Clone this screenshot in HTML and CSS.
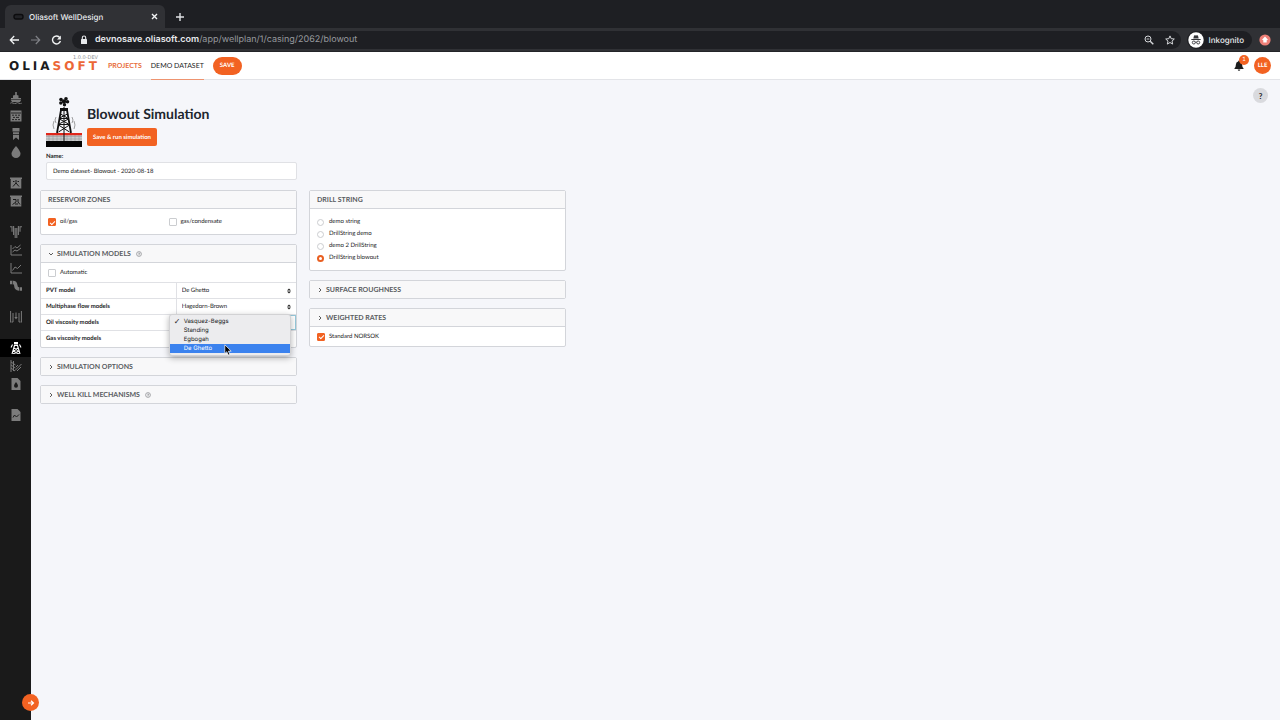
FILE: index.html
```html
<!doctype html>
<html lang="en">
<head>
  <meta charset="utf-8">
  <meta name="viewport" content="width=device-width, initial-scale=1.0">
  <title>Oliasoft WellDesign</title>
  <link rel="stylesheet" href="styles.css">
</head>
<body>

  <div class="tabs">
    <div class="tab">
      <svg class="favicon" width="12" height="8" viewBox="0 0 12 8"><rect x="1" y="1.5" width="9" height="4.5" rx="2" fill="#222327" stroke="#0c0c0e" stroke-width="1.4"/></svg>
      <span class="tab-title">Oliasoft WellDesign</span>
      <button class="plain" aria-label="Close tab"><svg width="7" height="7" viewBox="0 0 7 7"><path d="M1 1l5 5M6 1L1 6" stroke="#f1f3f4" stroke-width="1.4"/></svg></button>
    </div>
    <button class="plain new-tab" aria-label="New tab"><svg width="10" height="10" viewBox="0 0 10 10"><path d="M5 1v8M1 5h8" stroke="#dfe1e5" stroke-width="1.4"/></svg></button>
  </div>

  <div class="toolbar">
    <div class="nav-buttons">
      <button class="plain" aria-label="Back"><svg width="11" height="10" viewBox="0 0 11 10"><path d="M10 5H1.5M5.2 1L1.3 5l3.9 4" fill="none" stroke="#f1f3f4" stroke-width="1.3"/></svg></button>
      <button class="plain" aria-label="Forward"><svg width="11" height="10" viewBox="0 0 11 10"><path d="M1 5h8.500M5.800 1l3.900 4-3.900 4" fill="none" stroke="#808287" stroke-width="1.2"/></svg></button>
      <button class="plain" aria-label="Reload"><svg width="11" height="10" viewBox="0 0 11 10"><path d="M8.800 2.600A4 4 0 1 0 9.400 6" fill="none" stroke="#f1f3f4" stroke-width="1.4"/><path d="M9.900.6v3.900H6z" fill="#f1f3f4"/></svg></button>
    </div>
    <div class="address">
      <svg width="8" height="10" viewBox="0 0 8 10"><rect x="1" y="4" width="6" height="5" rx=".6" fill="#e8eaed"/><path d="M2.300 4V2.700a1.700 1.700 0 0 1 3.400 0V4" fill="none" stroke="#e8eaed" stroke-width="1.100"/></svg>
      <span class="url"><b>devnosave.oliasoft.com</b>/app/wellplan/1/casing/2062/blowout</span>
      <svg width="10" height="10" viewBox="0 0 10 10" fill="none" stroke="#d5d7da"><circle cx="4" cy="4" r="3"/><path d="M6.200 6.200L9.300 9.300" stroke-width="1.400"/><path d="M2.600 4h2.800" stroke-width=".9"/></svg>
      <svg width="10" height="10" viewBox="0 0 10 10"><path d="M5 .9l1.200 2.800 3.100.3-2.300 2.100.7 3L5 7.500 2.300 9.100l.7-3L.7 4l3.100-.3z" fill="none" stroke="#d5d7da"/></svg>
    </div>
    <div class="incognito">
      <svg width="16" height="16" viewBox="0 0 16 16"><circle cx="8" cy="8" r="7.700" fill="#fff"/><path d="M5.300 6.500L6 3.700q.2-.6.900-.4l1.100.3 1.100-.3q.7-.2.900.4l.7 2.800z" fill="#35363a"/><path d="M3.300 7.500h9.400" stroke="#35363a"/><g fill="none" stroke="#35363a" stroke-width=".9"><circle cx="5.800" cy="10.500" r="1.500"/><circle cx="10.200" cy="10.500" r="1.500"/><path d="M7.300 10.200q.7-.4 1.400 0"/></g></svg>
      <span>Inkognito</span>
    </div>
    <svg width="12" height="12" viewBox="0 0 12 12"><circle cx="6" cy="6" r="5.600" fill="#ee8078"/><path d="M6 2.600l3 3.200-1.300.4V8.600H4.300V6.200L3 5.800z" fill="#fff"/></svg>
  </div>

  <header class="header">
    <a class="logo" href="#"><span>OLIA</span><span class="logo-soft">SOFT</span><small>1.0.0-DEV</small></a>
    <nav class="menu">
      <a class="menu-link" href="#">Projects</a>
      <a class="menu-link active" href="#">Demo dataset</a>
    </nav>
    <button class="save">Save</button>
    <button class="plain bell" aria-label="Notifications">
      <svg width="10" height="11" viewBox="0 0 10 11"><path d="M5 .5q.8 0 .8.9 2.300.5 2.300 3.100 0 2.400 1.400 3.800v.6H.5v-.6q1.400-1.400 1.400-3.800 0-2.600 2.300-3.100 0-.9.800-.9z" fill="#1b1c1d"/><path d="M3.700 9.500h2.600a1.300 1.300 0 0 1-2.600 0z" fill="#1b1c1d"/></svg>
      <span class="count">1</span>
    </button>
    <button class="avatar">LLE</button>
  </header>

  <div class="page">
    <nav class="sidebar">
      <div class="side-group">
        <a class="side-link" href="#" aria-label="Rig"><svg viewBox="0 0 12 12"><path d="M5.200 0h1.600v3l1.700.5V6H11v1.200H1V6h2V3.500L5.200 3z"/><path d="M.7 7.800h10.600L10 10H2z"/><path d="M.3 11.200q1.400-1 2.900 0t2.900 0 2.900 0 2.700 0" fill="none" stroke="currentColor"/></svg></a>
        <a class="side-link" href="#" aria-label="Formation"><svg viewBox="0 0 12 12"><path d="M.5.500h11v11H.5z"/><path d="M1 3h10M2 5.200h2m1 0h2m1 0h2M3 7.400h2m1 0h3M2 9.600h2m1 0h2m1 0h2" stroke="#1a1a1a" stroke-width=".9"/></svg></a>
        <a class="side-link" href="#" aria-label="Casing"><svg viewBox="0 0 12 12"><path d="M2.500 0h7v3.500h-7zM3 4.200h6v2H3zM3 7h6v5L6 9.500 3 12z"/></svg></a>
        <a class="side-link" href="#" aria-label="Fluids"><svg viewBox="0 0 12 12"><path d="M6 0q4.500 5 4.500 7.700a4.500 4.300 0 0 1-9 0Q1.500 5 6 0z"/></svg></a>
      </div>
      <div class="side-group">
        <a class="side-link" href="#" aria-label="Pore pressure"><svg viewBox="0 0 12 12"><path d="M0 .5h12V2h-.7v9.500H.7V2H0z"/><path d="M6 3v3L3 9.500M6 6l3 3.500M3 4.500h1.500m3 0H9" fill="none" stroke="#1a1a1a"/></svg></a>
        <a class="side-link" href="#" aria-label="Temperature"><svg viewBox="0 0 12 12"><path d="M0 .5h12V2h-.7v9.500H.7V2H0z"/><path d="M3 4.500h3V7L2.500 9.500M8 4v3l2 2.500M5 9h3" fill="none" stroke="#1a1a1a"/></svg></a>
      </div>
      <div class="side-group">
        <a class="side-link" href="#" aria-label="Well schematic"><svg viewBox="0 0 12 12"><path d="M0 .8h2v5M3.600 0v9M5.200 2v10M6.800 2v10M8.400 0v9M12 .8h-2v5" fill="none" stroke="currentColor" stroke-width="1.100"/></svg></a>
        <a class="side-link" href="#" aria-label="Load curves"><svg viewBox="0 0 12 12"><path d="M1 1v10h11M2.500 8l2.500-2 2 1 4-3M2.500 5L5 2.500 7 4l3.500-3" fill="none" stroke="currentColor"/></svg></a>
        <a class="side-link" href="#" aria-label="Chart"><svg viewBox="0 0 12 12"><path d="M1 1v10h11M2.500 8.500L5 5l2.500 1.500L11 3" fill="none" stroke="currentColor"/></svg></a>
        <a class="side-link" href="#" aria-label="Trajectory"><svg viewBox="0 0 12 12"><path d="M0 2.500h3q2.500 0 2.700 2.700Q6 9 9 9h3" fill="none" stroke="currentColor" stroke-width="3.400"/><path d="M2.500.5v4M9.500 7v4.500" stroke="#1a1a1a" stroke-width=".6"/></svg></a>
      </div>
      <div class="side-group">
        <a class="side-link" href="#" aria-label="Tubing"><svg viewBox="0 0 12 12"><path d="M.6 0v11.500M3 2v9H1.500M11.400 0v11.500M9 2v9h1.500M6 1.500V7" fill="none" stroke="currentColor"/><path d="M4.300 6h3.400L6 8.500z"/></svg></a>
      </div>
      <div class="side-group">
        <a class="side-link current" href="#" aria-label="Blowout"><svg viewBox="0 0 12 12"><path d="M4.500 3.500L2 12M7.500 3.500L10 12M4 3.500h4M4 6l4 2.500M8 6L3 9.500M3 9l6 3M9 9l-6 3M1 5.500l1.500-3M11 5.500L9.500 2.500" fill="none" stroke="currentColor" stroke-width="1.100"/><path d="M4 0h4v2.500H4z"/></svg></a>
        <a class="side-link" href="#" aria-label="Survey"><svg viewBox="0 0 12 12"><path d="M1 0v12M3.500 1v10M1 2l4.500 3M1 5l4.500 3M1 8l4 3M5 10.500L11.500 4M7 11l4-4M6 7l2-2" fill="none" stroke="currentColor"/></svg></a>
        <a class="side-link" href="#" aria-label="Fluid report"><svg viewBox="0 0 12 12"><path d="M1.500 0h6l3 3v9h-9z"/><path d="M6 4q2 2.500 2 3.700a2 2 0 0 1-4 0Q4 6.500 6 4z" fill="#1a1a1a"/></svg></a>
      </div>
      <div class="side-group">
        <a class="side-link" href="#" aria-label="Report"><svg viewBox="0 0 12 12"><path d="M1.500 0h6l3 3v9h-9z"/><path d="M3 8.500L4.500 6 6.500 8 9 5.500" fill="none" stroke="#1a1a1a"/></svg></a>
      </div>
      <button class="expand" aria-label="Expand menu"><svg width="8" height="8" viewBox="0 0 8 8"><path d="M1 4h5M4 1.700L6.500 4 4 6.300" fill="none" stroke="#fff" stroke-width="1.200"/></svg></button>
    </nav>

    <main class="main">
      <button class="help" aria-label="Help">?</button>

      <div class="title">
        <svg width="36" height="50" viewBox="0 0 36 50">
          <path d="M0 38h36v6H0z" fill="#c9cacc"/>
          <path d="M0 39.500h36M0 42h36M3 38v6M7 38v6M11 38v6M15 38v6M21 38v6M25 38v6M29 38v6M33 38v6" stroke="#999b9f" stroke-width=".6"/>
          <path d="M0 44h36v6H0z" fill="#050505"/>
          <path d="M0 36h36v2.300H0z" fill="#e0271b"/>
          <path d="M14 11h8v3h-8z" fill="#111"/>
          <g fill="none" stroke="#111">
            <path d="M15 13l-4 23M21 13l4 23" stroke-width="1.800"/>
            <path d="M14.500 17l7 4M21.500 17l-8 4M13.500 22l9 5M22.500 22l-9.500 5M12.500 28l11 7M23.500 28l-11 7M14 21.500h8M13 27.500h10M18 10v34"/>
            <path d="M10 20q-2 3 0 6M8 24q-2 4 0 8M26 20q2 3 0 6M28 24q2 4 0 8" stroke="#777" stroke-width=".7"/>
          </g>
          <g fill="#111">
            <circle cx="18" cy="4.500" r="2.200"/>
            <circle cx="15" cy="2.500" r="1.800"/>
            <circle cx="20" cy="1.800" r="1.800"/>
            <circle cx="21.500" cy="4.800" r="1.800"/>
            <circle cx="14.800" cy="6" r="1.700"/>
            <circle cx="18.500" cy="7.800" r="1.700"/>
          </g>
        </svg>
        <div class="title-text">
          <h1>Blowout Simulation</h1>
          <button class="run">Save &amp; run simulation</button>
        </div>
      </div>

      <div class="name">
        <label for="name">Name:</label>
        <input id="name" type="text" value="Demo dataset- Blowout - 2020-08-18">
      </div>

      <div class="columns">
        <div class="column">
          <section class="panel">
            <h2>Reservoir zones</h2>
            <div class="options zones">
              <label><input type="checkbox" checked>oil/gas</label>
              <label><input type="checkbox">gas/condensate</label>
            </div>
          </section>

          <section class="panel">
            <h2><svg class="chevron" viewBox="0 0 6 6"><path d="M1 2l2 2 2-2"/></svg>Simulation models<svg class="info" viewBox="0 0 6 6"><circle cx="3" cy="3" r="2.400"/><path d="M2.200 2.300q.8-.8 1.600 0 0 .7-.8.900v1.200"/></svg></h2>
            <label class="line"><input type="checkbox">Automatic</label>
            <table class="models">
              <tr>
                <th><label for="pvt">PVT model</label></th>
                <td><select id="pvt"><option>De Ghetto</option></select></td>
              </tr>
              <tr>
                <th><label for="flow">Multiphase flow models</label></th>
                <td><select id="flow"><option>Hagedorn-Brown</option></select></td>
              </tr>
              <tr>
                <th><label for="oil">Oil viscosity models</label></th>
                <td class="open">
                  <select id="oil"><option></option></select>
                  <ul class="dropdown">
                    <li class="checked">Vasquez-Beggs</li>
                    <li>Standing</li>
                    <li>Egbogah</li>
                    <li class="hover">De Ghetto</li>
                  </ul>
                  <svg class="cursor" width="8" height="12" viewBox="0 0 8 12"><path d="M.8.8v8.700l2-1.800 1.400 3.400 1.600-.7-1.400-3.300h2.800z" fill="#000" stroke="#fff" stroke-width=".7"/></svg>
                </td>
              </tr>
              <tr>
                <th><label for="gas">Gas viscosity models</label></th>
                <td><select id="gas"><option></option></select></td>
              </tr>
            </table>
          </section>

          <section class="panel">
            <h2><svg class="chevron" viewBox="0 0 6 6"><path d="M2 1l2 2-2 2"/></svg>Simulation options</h2>
          </section>

          <section class="panel">
            <h2><svg class="chevron" viewBox="0 0 6 6"><path d="M2 1l2 2-2 2"/></svg>Well kill mechanisms<svg class="info" viewBox="0 0 6 6"><circle cx="3" cy="3" r="2.400"/><path d="M2.200 2.300q.8-.8 1.600 0 0 .7-.8.900v1.200"/></svg></h2>
          </section>
        </div>

        <div class="column">
          <section class="panel">
            <h2>Drill string</h2>
            <div class="options">
              <label><input type="radio" name="string">demo string</label>
              <label><input type="radio" name="string">DrillString demo</label>
              <label><input type="radio" name="string">demo 2 DrillString</label>
              <label><input type="radio" name="string" checked>DrillString blowout</label>
            </div>
          </section>

          <section class="panel">
            <h2><svg class="chevron" viewBox="0 0 6 6"><path d="M2 1l2 2-2 2"/></svg>Surface roughness</h2>
          </section>

          <section class="panel">
            <h2><svg class="chevron" viewBox="0 0 6 6"><path d="M2 1l2 2-2 2"/></svg>Weighted rates</h2>
            <label class="line"><input type="checkbox" checked>Standard NORSOK</label>
          </section>
        </div>
      </div>
    </main>
  </div>

</body>
</html>
```
FILE: styles.css
```css
* {
  box-sizing: border-box;
}
body {
  margin: 0;
  min-height: 100vh;
  display: flex;
  flex-direction: column;
  font: 7px/12px Lato, sans-serif;
  text-rendering: geometricPrecision;
  color: #1b1c1d;
  background: #f5f6fa;
}
button, input, select {
  font: inherit;
  color: inherit;
  text-rendering: inherit;
  margin: 0;
}
button {
  border: 0;
  padding: 0;
}
a {
  text-decoration: none;
}
svg {
  display: block;
  flex: none;
}
.plain {
  background: none;
}

/* browser bar */
.tabs {
  display: flex;
  align-items: flex-end;
  height: 28px;
  padding-left: 5px;
  background: #1e1f23;
}
.tab {
  display: flex;
  align-items: center;
  gap: 4px;
  width: 160px;
  height: 23px;
  padding: 0 7px 0 8px;
  border-radius: 6px 6px 0 0;
  background: #303135;
  color: #e8eaed;
  font: 500 8px/12px Inter, sans-serif;
}
.tab-title {
  flex: 1;
}
.new-tab {
  margin: 0 10px 6px;
}
.toolbar {
  display: flex;
  align-items: center;
  gap: 6px;
  height: 24px;
  padding: 0 9px;
  background: #303135;
  border-bottom: 1px solid #232428;
}
.nav-buttons {
  display: flex;
  gap: 10px;
  margin-right: 4px;
}
.address {
  flex: 1;
  display: flex;
  align-items: center;
  gap: 11px;
  height: 18px;
  padding: 0 6px 0 8px;
  border-radius: 9px;
  background: #1e1f23;
  color: #96999e;
  font: 9px/15px Inter, sans-serif;
}
.url {
  flex: 1;
  margin-left: -4px;
}
.url b {
  color: #e8eaed;
  font-weight: 600;
}
.incognito {
  display: flex;
  align-items: center;
  gap: 5px;
  height: 18px;
  margin-right: 1px;
  padding: 0 8px 0 1px;
  border-radius: 9px;
  background: #1e1f23;
  color: #e8eaed;
  font: 500 8px/14px Inter, sans-serif;
}

/* top menu */
.header {
  display: flex;
  align-items: center;
  height: 28px;
  padding: 0 9px;
  background: #fff;
  border-bottom: 1px solid #e3e4e8;
}
.logo {
  position: relative;
  width: 99px;
  color: #1b1c1d;
  font: bold 12px/14px "DejaVu Sans", sans-serif;
  letter-spacing: 3px;
}
.logo-soft {
  color: #ec6737;
}
.logo small {
  position: absolute;
  top: -4px;
  right: 10px;
  color: #8d8f93;
  font: 5px/6px "DejaVu Sans", sans-serif;
  letter-spacing: 0;
}
.menu {
  display: flex;
  gap: 9px;
  align-self: stretch;
}
.menu-link {
  line-height: 28px;
  height: 28px;
  color: #e8703e;
  font-size: 7px;
  font-weight: bold;
  text-transform: uppercase;
}
.menu-link.active {
  color: #1b1c1d;
  font-weight: normal;
  border-bottom: 1px solid #ee9470;
}
.save {
  height: 18px;
  margin-left: 9px;
  padding: 0 7px;
  border-radius: 9px;
  background: #f26222;
  color: #fff;
  font-size: 6px;
  font-weight: bold;
  text-transform: uppercase;
}
.bell {
  position: relative;
  margin-left: auto;
}
.count {
  position: absolute;
  top: -5px;
  right: -5px;
  width: 10px;
  height: 10px;
  border-radius: 50%;
  background: #f26222;
  color: #fff;
  font-size: 6px;
  line-height: 10px;
}
.avatar {
  width: 17px;
  height: 17px;
  margin-left: 10px;
  border-radius: 50%;
  background: #f26222;
  color: #fff;
  font-size: 6px;
  font-weight: bold;
}

.page {
  flex: 1;
  display: flex;
}
.sidebar {
  position: relative;
  flex: none;
  width: 31px;
  padding-top: 9px;
  background: #1a1a1a;
}
.side-group {
  margin-bottom: 13px;
}
.side-link {
  display: flex;
  align-items: center;
  justify-content: center;
  height: 18px;
  color: #7b7b7b;
}
.side-link svg {
  width: 12px;
  height: 12px;
  fill: currentColor;
}
.side-link.current {
  background: #000;
  color: #fff;
}
.expand {
  position: absolute;
  right: -8px;
  bottom: 9px;
  display: flex;
  align-items: center;
  justify-content: center;
  width: 17px;
  height: 17px;
  border-radius: 50%;
  background: #f26222;
}

.main {
  position: relative;
  flex: 1;
  padding: 17px 9px;
  font-size: 6px;
}
.help {
  position: absolute;
  top: 8px;
  right: 12px;
  width: 15px;
  height: 15px;
  border-radius: 50%;
  background: #d9dade;
  font-size: 8px;
  font-weight: bold;
}
.title {
  display: flex;
  gap: 5px;
  padding-left: 6px;
}
.title-text {
  padding-top: 8px;
}
h1 {
  margin: 0 0 5px;
  font-size: 14px;
  line-height: 18px;
  color: #20262e;
}
.run {
  height: 18px;
  padding: 1px 6px 0;
  border-radius: 2px;
  background: #f26222;
  color: #fff;
  font-weight: bold;
}
.name {
  max-width: 257px;
  padding: 4px 0 10px 6px;
}
.name label {
  display: block;
  font-weight: bold;
  line-height: 11px;
}
.name input {
  display: block;
  width: 100%;
  height: 18px;
  padding: 0 6px;
  border: 1px solid #e0e1e5;
  border-radius: 2px;
  background: #fff;
}

.columns {
  display: flex;
  gap: 12px;
}
.column {
  flex: 0 1 257px;
}
.panel {
  margin-bottom: 9px;
  border: 1px solid #d3d5da;
  border-radius: 2px;
  background: #fff;
}
h2 {
  display: flex;
  align-items: center;
  margin: 0;
  height: 17px;
  padding: 1px 7px 0;
  background: #f8f8f9;
  color: #5a5d62;
  font-size: 7px;
  text-transform: uppercase;
}
.chevron {
  width: 6px;
  height: 6px;
  margin-right: 3px;
  fill: none;
  stroke: #333;
  stroke-width: .8;
}
.info {
  width: 6px;
  height: 6px;
  margin-left: 5px;
  fill: none;
  stroke: #85878b;
  stroke-width: .7;
}
.options, .line {
  border-top: 1px solid #d3d5da;
}
.options {
  padding: 7px 7px 6px;
}
.zones {
  display: grid;
  grid-template-columns: 1fr 1fr;
}
.options label, .line {
  display: flex;
  align-items: center;
  gap: 4px;
}
.line {
  height: 20px;
  padding: 0 7px;
}
input[type=checkbox], input[type=radio] {
  appearance: none;
  display: grid;
  place-items: center;
  width: 8px;
  height: 8px;
  border: 1px solid #cbcdd0;
  border-radius: 1px;
  background: #fff;
}
input[type=radio] {
  width: 7px;
  height: 7px;
  margin-right: 1px;
  border-radius: 50%;
}
input[type=checkbox]:checked {
  border-color: #f26222;
  background: #f26222;
}
input[type=checkbox]:checked::after {
  content: "";
  width: 4px;
  height: 2px;
  border: solid #fff;
  border-width: 0 0 1px 1px;
  transform: rotate(-45deg);
}
input[type=radio]:checked {
  border: 2px solid #e95f21;
}
.models {
  width: 100%;
  table-layout: fixed;
  border-collapse: collapse;
}
.models th, .models td {
  height: 16px;
  padding: 0;
  border-top: 1px solid #e0e1e5;
  line-height: 11px;
}
.models th {
  width: 53%;
  padding-left: 5px;
  text-align: left;
}
.models td {
  border-left: 1px solid #e0e1e5;
}
.models select {
  appearance: none;
  display: block;
  width: 100%;
  height: 15px;
  padding: 0 5px;
  border: 0;
  background: url("data:image/svg+xml,%3Csvg xmlns='http://www.w3.org/2000/svg' width='4' height='6'%3E%3Cpath d='M0 2.500L2 .5l2 2zM0 3.500l2 2 2-2z' fill='%23222'/%3E%3C/svg%3E") no-repeat right 5px center;
}
.models .open {
  position: relative;
}
.models .open select {
  border: 1px solid #96c8da;
  background: #fff;
}
.dropdown {
  position: absolute;
  top: -1px;
  left: -8px;
  z-index: 1;
  width: 122px;
  margin: 0;
  padding: 2px 0;
  list-style: none;
  border: 1px solid #d2d2d4;
  border-radius: 3px;
  background: #ececee;
  box-shadow: 0 2px 6px rgba(0, 0, 0, .3);
  font: 6px/9px Inter, sans-serif;
}
.dropdown li {
  position: relative;
  padding-left: 14px;
}
.dropdown .checked::before {
  content: "✓";
  position: absolute;
  left: 4px;
  font: bold 8px/9px "DejaVu Sans", sans-serif;
}
.dropdown .hover {
  background: #3b82ee;
  color: #fff;
}
.cursor {
  position: absolute;
  top: 29px;
  left: 47px;
  z-index: 2;
}
```
